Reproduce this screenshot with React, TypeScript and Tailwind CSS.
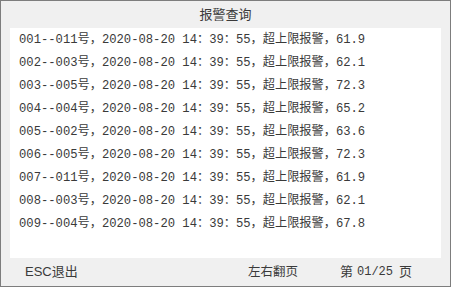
import React from 'react';

const rows = [
  ['001', '011', '61.9'],
  ['002', '003', '62.1'],
  ['003', '005', '72.3'],
  ['004', '004', '65.2'],
  ['005', '002', '63.6'],
  ['006', '005', '72.3'],
  ['007', '011', '61.9'],
  ['008', '003', '62.1'],
  ['009', '004', '67.8'],
];

const mono = "font-['Liberation_Mono','Noto_Sans_CJK_SC',monospace]";
const sans = "font-['Liberation_Sans','Noto_Sans_CJK_SC',sans-serif]";

export default function App() {
  return (
    <div className="w-[451px] h-[287px] bg-[#f0f0f0] border border-[#7d7d7d] flex flex-col text-[#3a3a3a]">
      <div className={`h-[27px] flex items-center justify-center text-[13px] ${sans}`}>报警查询</div>
      <div className="mx-[9px] h-[230px] bg-white pt-[1px]">
        {rows.map(([a, b, v]) => (
          <div key={a} className={`h-[23px] flex items-center pl-[9px] text-[12.2px] whitespace-pre ${mono}`}>
            {`${a}--${b}号，2020-08-20 14：39：55，超上限报警，${v}`}
          </div>
        ))}
      </div>
      <div className={`flex-1 flex items-center pl-[24px] text-[13px] ${sans}`}>
        <span className="w-[223px]">ESC退出</span>
        <span className="w-[92px] text-[12.5px]">左右翻页</span>
        <span className="flex items-center">
          第<span className={`${mono} text-[12px] ml-[4px] mr-[6px]`}>01/25</span>页
        </span>
      </div>
    </div>
  );
}
